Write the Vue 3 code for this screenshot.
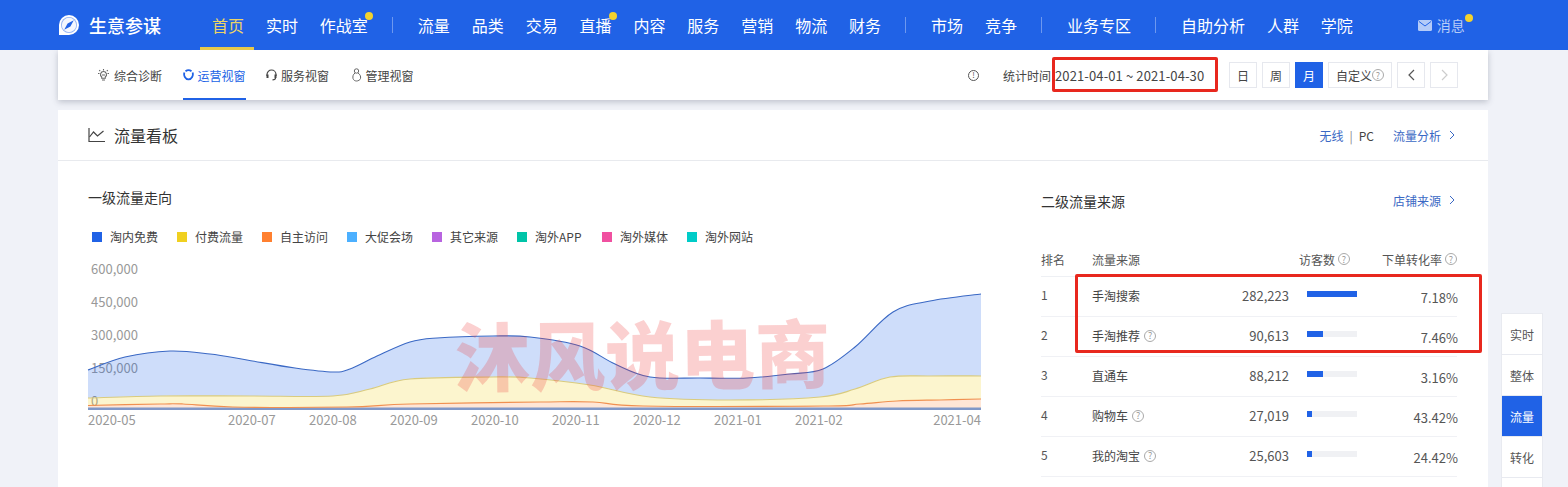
<script setup>
const navGroups = [
  { items: [{ t: '首页', active: true }, { t: '实时' }, { t: '作战室', dot: true }] },
  { items: [{ t: '流量' }, { t: '品类' }, { t: '交易' }, { t: '直播', dot: true }, { t: '内容' }, { t: '服务' }, { t: '营销' }, { t: '物流' }, { t: '财务' }] },
  { items: [{ t: '市场' }, { t: '竞争' }] },
  { items: [{ t: '业务专区' }] },
  { items: [{ t: '自助分析' }, { t: '人群' }, { t: '学院' }] }
]
const legend = [
  ['淘内免费', '#2062e6'], ['付费流量', '#f0d020'], ['自主访问', '#ff8030'], ['大促会场', '#4cb0ff'],
  ['其它来源', '#b864e0'], ['淘外APP', '#00c4a8'], ['淘外媒体', '#f050a0'], ['淘外网站', '#00ccc8']
]
const rows = [
  { n: 1, name: '手淘搜索', v: '282,223', w: 50, p: '7.18%' },
  { n: 2, name: '手淘推荐', help: true, v: '90,613', w: 16, p: '7.46%' },
  { n: 3, name: '直通车', v: '88,212', w: 16, p: '3.16%' },
  { n: 4, name: '购物车', help: true, v: '27,019', w: 5, p: '43.42%' },
  { n: 5, name: '我的淘宝', help: true, v: '25,603', w: 5, p: '24.42%' }
]
const yTicks = [['600,000', 16], ['450,000', 49], ['300,000', 82], ['150,000', 115], ['0', 148]]
const xTicks = [['2020-05', 0, 'start'], ['2020-07', 140, 'start'], ['2020-08', 221, 'start'], ['2020-09', 302, 'start'],
  ['2020-10', 383, 'start'], ['2020-11', 464, 'start'], ['2020-12', 545, 'start'], ['2021-01', 626, 'start'],
  ['2021-02', 707, 'start'], ['2021-04', 893, 'end']]

// curve points in chart coordinates (origin 88,254)
const off = (pts) => pts.map(([x, y]) => [x - 88, y - 254])
const blue = off([[88, 371], [125, 358], [170, 352], [210, 355], [247, 361], [295, 369], [333, 373], [350, 370], [377, 357], [410, 343], [437, 339], [493, 337], [530, 338], [580, 347], [615, 365], [650, 378], [700, 379], [747, 379], [790, 375], [823, 370], [855, 348], [893, 313], [930, 302], [981, 295]])
const yellow = off([[88, 399], [160, 397], [250, 397], [333, 397], [370, 390], [410, 380], [493, 378], [530, 379], [590, 386], [650, 398], [730, 401], [820, 398], [855, 390], [890, 378], [930, 377], [981, 377]])
const orange = off([[88, 406.5], [160, 405], [183, 405], [233, 408], [347, 408], [410, 405], [540, 403], [593, 403], [643, 407], [823, 407], [860, 405], [897, 402], [940, 401], [981, 400]])
const base = off([[88, 409], [981, 409]])

function smooth(p, move = true) {
  let d = move ? `M${p[0][0]} ${p[0][1]}` : `L${p[0][0]} ${p[0][1]}`
  for (let i = 0; i < p.length - 1; i++) {
    const a = p[i - 1] || p[i], b = p[i], c = p[i + 1], e = p[i + 2] || c
    const k = 0.17
    d += ` C${(b[0] + (c[0] - a[0]) * k).toFixed(1)} ${(b[1] + (c[1] - a[1]) * k).toFixed(1)} ${(c[0] - (e[0] - b[0]) * k).toFixed(1)} ${(c[1] - (e[1] - b[1]) * k).toFixed(1)} ${c[0]} ${c[1]}`
  }
  return d
}
const band = (top, bot) => smooth(top) + ' ' + smooth([...bot].reverse(), false) + ' Z'
const blueLine = smooth(blue), yellowLine = smooth(yellow), orangeLine = smooth(orange)
const blueArea = band(blue, yellow), yellowArea = band(yellow, orange), orangeArea = band(orange, base)
</script>

<template>
  <div class="page">
    <header class="topbar">
      <div class="brand">
        <svg class="logo" viewBox="0 0 22 22" width="22" height="22">
          <path d="M11 1a10 10 0 1 1 0 20H1V11A10 10 0 0 1 11 1z" fill="#fff" />
          <circle cx="11" cy="11" r="8" fill="#8fb0f2" />
          <circle cx="11" cy="11" r="7.200" fill="#f4f7fe" />
          <path d="M15.800 6.200 12.400 12.400 6.200 15.800 9.600 9.600z" fill="#2062e6" />
        </svg>
        <span class="brand-name">生意参谋</span>
      </div>
      <nav class="nav">
        <template v-for="(g, i) in navGroups" :key="i">
          <span v-if="i" class="nav-sep"></span>
          <div class="nav-group">
            <a v-for="it in g.items" :key="it.t" class="nav-item" :class="{ active: it.active }">
              {{ it.t }}<i v-if="it.dot" class="dot"></i>
            </a>
          </div>
        </template>
      </nav>
      <div class="msg">
        <svg width="14" height="11" viewBox="0 0 14 11"><rect width="14" height="11" rx="1.500" fill="#b4cbf8" /><path d="M1 1.500 7 6l6-4.500" fill="none" stroke="#2062e6" stroke-width="1" /></svg>
        <span class="msg-text">消息<i class="dot"></i></span>
      </div>
    </header>

    <section class="subbar">
      <div class="tabs">
        <a class="tab">
          <svg class="ico-first" width="11" height="12" viewBox="0 0 11 12" fill="none" stroke="#666" stroke-width="1.100"><path d="M5.500 2.500a3 3 0 0 1 1.800 5.400v1.300H3.700V7.900A3 3 0 0 1 5.500 2.500zM4 11h3M5.500 0v1.500M0 4.500h1.500M9.500 4.500H11M1.200 1.200l1 1M9.800 1.200l-1 1M4 6h3" /></svg>
          综合诊断
        </a>
        <a class="tab on">
          <svg width="11" height="12" viewBox="0 0 11 12" fill="none" stroke="#2062e6" stroke-width="1.800"><path d="M2.500 2.200a5 5 0 0 1 6 0M9.600 3.500c1 3-.8 6.600-4.100 6.900-3.300-.3-5.100-3.900-4.100-6.900" /></svg>
          运营视窗
        </a>
        <a class="tab">
          <svg width="11" height="12" viewBox="0 0 11 12" fill="none" stroke="#444" stroke-width="1.200"><path d="M1 7V5.500a4.500 4.500 0 0 1 9 0V7" /><rect x=".5" y="5.500" width="2" height="3.500" fill="#444" stroke="none" /><rect x="8.500" y="5.500" width="2" height="3.500" fill="#444" stroke="none" /><path d="M9.500 9c0 1.300-1.500 1.800-3 1.800" /></svg>
          服务视窗
        </a>
        <a class="tab">
          <svg class="ico-last" width="10" height="14" viewBox="0 0 10 14" fill="none" stroke="#666"><circle cx="4.500" cy="3" r="2.200" /><path d="M3 5C1 6.500.6 8.500 1 10.500c.4 1.600 2 2.500 3.500 2.500s3.600-.9 4-2.500c.4-2-.2-4-2.500-5.500" /></svg>
          管理视窗
        </a>
      </div>
      <div class="period">
        <span class="info">!</span>
        <span class="period-label">统计时间</span>
        <span class="period-date">2021-04-01 ~ 2021-04-30</span>
        <div class="btns">
          <button class="btn">日</button>
          <button class="btn">周</button>
          <button class="btn sel">月</button>
          <button class="btn wide">自定义<i class="help"></i></button>
          <button class="btn"><svg width="7" height="12" viewBox="0 0 7 12" fill="none" stroke="#555" stroke-width="1.200"><path d="M6 1 1 6l5 5" /></svg></button>
          <button class="btn"><svg width="7" height="12" viewBox="0 0 7 12" fill="none" stroke="#ccc" stroke-width="1.200"><path d="m1 1 5 5-5 5" /></svg></button>
        </div>
      </div>
    </section>

    <section class="card">
      <div class="card-head">
        <div class="card-title">
          <svg width="17" height="16" viewBox="0 0 17 16" fill="none" stroke="#444" stroke-width="1.200"><path d="M1 1v13.500h16" /><path d="m1.500 10 4-5 4 4 6-5" /></svg>
          流量看板
        </div>
        <div class="card-links">
          <a class="link">无线</a><span class="bar-sep">|</span><span class="pc">PC</span>
          <a class="link more">流量分析<svg class="chev" width="6" height="10" viewBox="0 0 6 10" fill="none" stroke="#3a68c4"><path d="m1 1 4 4-4 4" /></svg></a>
        </div>
      </div>

      <div class="card-body">
        <div class="left">
          <h3 class="sec-title">一级流量走向</h3>
          <ul class="legend">
            <li v-for="l in legend" :key="l[0]"><i :style="{ background: l[1] }"></i>{{ l[0] }}</li>
          </ul>
          <svg class="chart" width="893" height="176" viewBox="0 0 893 176">
            <text v-for="t in yTicks" :key="t[0]" x="3" :y="t[1] + 5" class="tick">{{ t[0] }}</text>
            <path :d="blueArea" fill="rgba(32,98,230,.22)" />
            <path :d="yellowArea" fill="rgba(240,208,32,.22)" />
            <path :d="orangeArea" fill="rgba(255,128,48,.2)" />
            <rect x="0" y="154.500" width="893" height="2.500" fill="#8098c8" />
            <path :d="orangeLine" fill="none" stroke="#f09050" stroke-width="1.200" />
            <path :d="yellowLine" fill="none" stroke="#d9cb7e" stroke-width="1.200" />
            <path :d="blueLine" fill="none" stroke="#3a68c4" stroke-width="1.100" />
            <text v-for="t in xTicks" :key="t[0]" :x="t[1]" y="172" :text-anchor="t[2]" class="tick">{{ t[0] }}</text>
          </svg>
        </div>

        <div class="right">
          <div class="right-head">
            <h3 class="sec-title">二级流量来源</h3>
            <a class="link more">店铺来源<svg class="chev" width="6" height="10" viewBox="0 0 6 10" fill="none" stroke="#3a68c4"><path d="m1 1 4 4-4 4" /></svg></a>
          </div>
          <div class="grid head">
            <span>排名</span>
            <span>流量来源</span>
            <span class="h-visit">访客数<i class="help"></i></span>
            <span class="h-rate">下单转化率<i class="help"></i></span>
          </div>
          <div v-for="r in rows" :key="r.n" class="grid row">
            <span class="rank">{{ r.n }}</span>
            <span class="src">{{ r.name }}<i v-if="r.help" class="help big"></i></span>
            <span class="val">{{ r.v }}</span>
            <span class="track"><b :style="{ width: r.w + 'px' }"></b></span>
            <span class="pct">{{ r.p }}</span>
          </div>
        </div>
      </div>
    </section>

    <div class="mark">沐风说电商</div>
    <div class="redbox box-date"></div>
    <div class="redbox box-rows"></div>

    <aside class="side">
      <a>实时</a><a>整体</a><a class="cur">流量</a><a>转化</a><a></a>
    </aside>
  </div>
</template>

<style>
html, body { margin: 0; background: #f0f2f8; }
</style>

<style scoped>
.page {
  position: relative; width: 1568px; height: 487px; overflow: hidden; background: #f0f2f8;
  font-family: "Noto Sans CJK SC", "Noto Sans", sans-serif; font-size: 12px; color: #333;
}
a { cursor: pointer; }
i { font-style: normal; }
h3 { margin: 0; font-weight: 400; }
ul { margin: 0; padding: 0; list-style: none; }

.topbar {
  position: relative; z-index: 2; height: 50px; background: #2062e6; color: #fff;
  display: flex; align-items: center; padding-left: 58px;
}
.brand { display: flex; align-items: center; width: 155px; flex: none; margin-right: -1px; }
.logo { margin-top: -1px; }
.brand-name { margin-left: 9px; font-size: 18px; font-weight: 500; line-height: 24px; }
.nav { display: flex; align-items: center; height: 50px; }
.nav-group { display: flex; gap: 21.900px; height: 50px; }
.nav-sep { width: 1px; height: 16px; margin: 0 25px 0 24px; background: rgba(255, 255, 255, .35); }
.nav-item { position: relative; display: flex; align-items: center; height: 50px; padding-bottom: 1px; box-sizing: border-box; font-size: 16px; color: #fff; }
.nav-item.active { color: #ecd466; }
.nav-item.active::after {
  content: ""; position: absolute; left: -12px; right: -10px; bottom: 0; height: 3px; background: #e6c84a;
}
.dot { position: absolute; width: 8px; height: 8px; border-radius: 50%; background: #f2d22e; right: -5px; top: 12px; }
.msg { display: flex; align-items: center; margin-left: 65px; color: #b8ccf8; font-size: 14px; }
.msg-text { position: relative; margin-left: 5px; }
.msg-text .dot { right: -8px; top: -1px; }

.subbar {
  position: relative; z-index: 1; height: 50px; margin: 0 80px 0 58px; background: #fff;
  box-shadow: 0 2px 6px rgba(60, 70, 90, .28);
  display: flex; align-items: stretch; justify-content: space-between;
}
.tabs { display: flex; padding-left: 40px; gap: 20.500px; }
.tab { position: relative; display: flex; align-items: center; gap: 4px; height: 50px; color: #444; white-space: nowrap; }
.ico-first { margin-right: 1px; }
.ico-last { margin-left: 2px; }
.tab.on { color: #2062e6; }
.tab.on::after { content: ""; position: absolute; left: 0; right: 0; bottom: 0; height: 2px; background: #2062e6; }
.period { display: flex; align-items: center; padding-right: 30px; }
.info {
  display: flex; align-items: center; justify-content: center; width: 9px; height: 9px;
  border: 1px solid #555; border-radius: 50%; font-size: 8px; line-height: 1; color: #555;
}
.period-label { margin-left: 24px; color: #444; }
.period-date { margin-left: 4px; width: 174px; font-size: 13px; letter-spacing: .12px; color: #444; white-space: nowrap; }
.btns { display: flex; gap: 5px; }
.btn {
  display: flex; align-items: center; justify-content: center; box-sizing: border-box; width: 28px; height: 26px; padding: 0;
  border: 1px solid #e6e8ee; background: #fff; font: inherit; color: #444;
}
.btn.sel { background: #2062e6; border-color: #2062e6; color: #fff; }
.btn.wide { width: 64px; }
.btn.wide .help { margin-left: 0; }

.help {
  display: inline-block; box-sizing: border-box; width: 12px; height: 12px; border: 1px solid #aaa; border-radius: 50%;
  margin-left: 3px; position: relative; flex: none;
}
.help::after {
  content: "?"; position: absolute; inset: 0; display: flex; align-items: center; justify-content: center;
  font-size: 9px; line-height: 1; color: #999;
}
.help.big { margin-left: 4px; }

.card { margin: 10px 80px 0 58px; background: #fff; height: 400px; }
.card-head {
  height: 50px; border-bottom: 1px solid #e8eaee; display: flex; align-items: center; justify-content: space-between;
  padding: 0 33px 0 30px;
}
.card-title { display: flex; align-items: center; gap: 9px; font-size: 16px; color: #333; padding-bottom: 1px; }
.card-links { display: flex; align-items: center; }
.link { color: #3a68c4; display: flex; align-items: center; }
.bar-sep { margin: 0 6px; color: #888; }
.pc { color: #444; }
.more { white-space: nowrap; }
.card-links .more { margin-left: 19px; }
.chev { margin-left: 8px; }

.card-body { display: flex; padding-left: 30px; }
.left { width: 893px; flex: none; }
.sec-title { font-size: 14px; line-height: 20px; color: #333; }
.left .sec-title { margin-top: 26px; }
.legend { display: flex; height: 16px; margin-top: 22px; padding-left: 4px; }
.legend li { width: 85px; flex: none; display: flex; align-items: center; gap: 8px; color: #444; line-height: 16px; white-space: nowrap; }
.legend i { width: 10px; height: 10px; }
.chart { display: block; margin-top: 8px; overflow: visible; }
.tick { font-size: 13px; fill: #999; }

.right { margin-left: 60px; width: 416px; flex: none; }
.right-head { display: flex; justify-content: space-between; align-items: center; margin-top: 30px; height: 20px; padding-right: 2px; }
.right-head .link { padding-bottom: 2px; }
.grid { display: grid; grid-template-columns: 51px 130px 67px 68px 100px; align-items: center; }
.head { margin-top: 31px; height: 34px; border-bottom: 1px solid #eef0f4; color: #555; grid-template-columns: 51px 200px 58px 107px; }
.head .h-visit { justify-self: end; display: flex; align-items: center; white-space: nowrap; }
.head .h-rate { justify-self: end; display: flex; align-items: center; white-space: nowrap; }
.row { height: 37px; padding-bottom: 2px; border-bottom: 1px solid #f0f1f5; color: #444; }
.rank { color: #555; padding-bottom: 2px; }
.src { display: flex; align-items: center; }
.val { text-align: right; color: #555; font-size: 13px; }
.track { display: block; width: 50px; height: 6px; margin-left: 18px; margin-top: -3px; background: #f0f1f4; overflow: hidden; }
.track b { display: block; height: 6px; background: #2062e6; }
.pct { text-align: right; color: #555; font-size: 13px; padding-top: 3px; margin-right: -1px; }

.mark {
  position: absolute; z-index: 3; left: 455px; top: 300px; font-size: 75px; line-height: 104px; font-weight: 900;
  color: rgba(240, 60, 60, .24); white-space: nowrap; transform: rotate(-.6deg); pointer-events: none;
}
.redbox { position: absolute; z-index: 4; box-sizing: border-box; border: 3px solid #e8281e; border-radius: 2px; }
.box-date { left: 1052px; top: 57px; width: 166px; height: 35px; }
.box-rows { left: 1075px; top: 274px; width: 407px; height: 79px; }

.side { position: absolute; z-index: 2; left: 1501px; top: 313px; width: 42px; box-sizing: border-box; background: #fff; border: 1px solid #e8eaf0; }
.side a { display: flex; align-items: center; justify-content: center; height: 41px; border-bottom: 1px solid #e8eaf0; color: #555; box-sizing: border-box; }
.side a.cur { background: #2062e6; color: #fff; }
</style>
